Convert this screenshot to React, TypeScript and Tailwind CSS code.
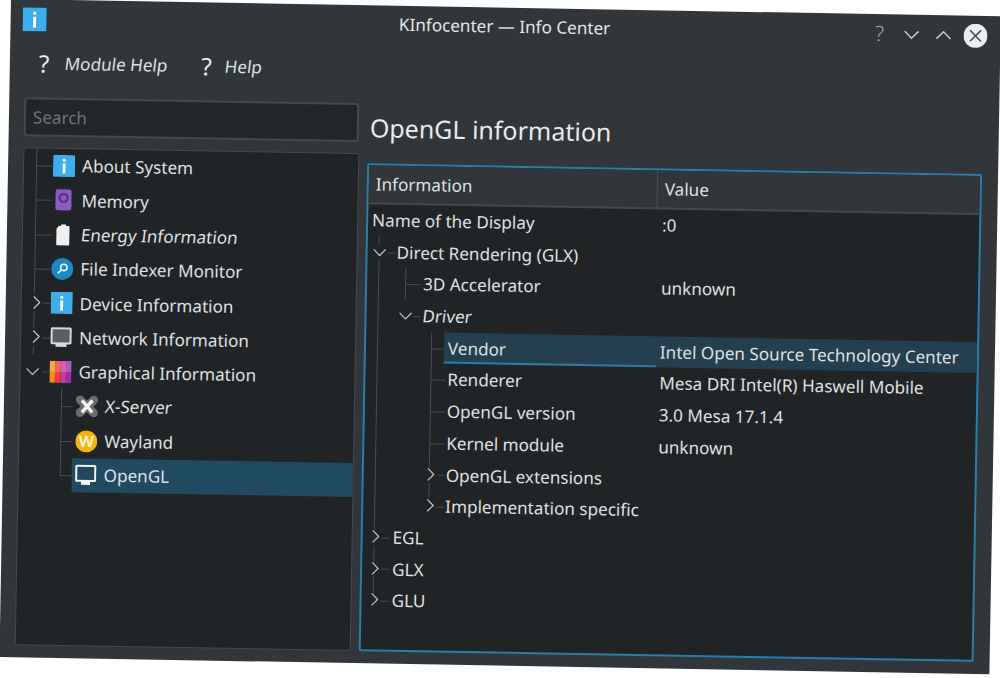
import React from "react";

const Info = ({ big }: { big?: boolean }) => (
  <svg viewBox="0 0 22 22" className={big ? "w-[24px] h-[24px] shrink-0" : "w-[22px] h-[22px] shrink-0"}>
    <rect x="0" y="0" width="22" height="22" rx="1" fill="#3daee9" />
    <rect x="9.6" y="4" width="2.8" height="2.8" fill="#fcfcfc" />
    <rect x="9.6" y="8.5" width="2.8" height="10" fill="#fcfcfc" />
  </svg>
);
const Memory = () => (
  <svg viewBox="0 0 22 22" className="w-[22px] h-[22px] shrink-0">
    <rect x="3" y="0.5" width="16" height="21" rx="2.5" fill="#8e5bc4" />
    <circle cx="11" cy="9" r="4" fill="none" stroke="#57377f" strokeWidth="2.4" />
  </svg>
);
const Battery = () => (
  <svg viewBox="0 0 22 22" className="w-[22px] h-[22px] shrink-0">
    <path d="M7 2h2V0.5h5V2h2.5a1 1 0 0 1 1 1v17.5a1 1 0 0 1-1 1H5.5a1 1 0 0 1-1-1V5z" fill="#f0f0f0" />
  </svg>
);
const Indexer = () => (
  <svg viewBox="0 0 22 22" className="w-[22px] h-[22px] shrink-0">
    <circle cx="11" cy="11" r="11" fill="#1b89c4" />
    <circle cx="12.5" cy="9.5" r="3.2" fill="none" stroke="#e8f4fb" strokeWidth="1.6" />
    <path d="M10 12l-3.5 3.5" stroke="#e8f4fb" strokeWidth="1.8" />
  </svg>
);
const Network = () => (
  <svg viewBox="0 0 22 22" className="w-[22px] h-[22px] shrink-0">
    <path d="M2 0.5h18a1.5 1.5 0 0 1 1.5 1.5v14a1.5 1.5 0 0 1-1.5 1.5h-3.5v2.5h-11v-2.5H2A1.5 1.5 0 0 1 .5 16V2A1.5 1.5 0 0 1 2 .5z" fill="#d9dadb" />
    <rect x="2.5" y="2.5" width="17" height="13" fill="#5b5e62" />
  </svg>
);
const Graphics = () => (
  <svg viewBox="0 0 22 22" className="w-[22px] h-[22px] shrink-0">
    <rect x="0" y="0" width="5.5" height="22" fill="#f98d12" />
    <rect x="5.5" y="0" width="5.5" height="22" fill="#ea3f3a" />
    <rect x="11" y="0" width="5.5" height="22" fill="#d13a93" />
    <rect x="16.5" y="0" width="5.5" height="22" fill="#9a2eb0" />
    <rect x="0" y="0" width="22" height="11" fill="#ffffff" fillOpacity="0.2" />
  </svg>
);
const XServer = () => (
  <svg viewBox="0 0 22 22" className="w-[22px] h-[22px] shrink-0">
    <path d="M4 4.5 L18 17.5 M18 4.5 L4 17.5" stroke="#6a6c6e" strokeWidth="8.5" strokeLinecap="round" />
    <path d="M6 5 L16.5 17 M16.5 5 L6 17" stroke="#f4f4f4" strokeWidth="3.4" />
  </svg>
);
const Wayland = () => (
  <svg viewBox="0 0 22 22" className="w-[22px] h-[22px] shrink-0">
    <circle cx="11" cy="11" r="11" fill="#f4b30e" />
    <text x="11" y="16.5" textAnchor="middle" fontSize="15.5" fontWeight="700" fill="#fff1c8" fontFamily="Noto Sans, sans-serif">W</text>
  </svg>
);
const Monitor = () => (
  <svg viewBox="0 0 22 22" className="w-[22px] h-[22px] shrink-0">
    <path d="M2 0.5h18a1.5 1.5 0 0 1 1.5 1.5v14a1.5 1.5 0 0 1-1.5 1.5h-4.5v3h-9v-3H2A1.5 1.5 0 0 1 .5 16V2A1.5 1.5 0 0 1 2 .5z" fill="#f2f4f5" />
    <rect x="2.5" y="2.5" width="17" height="13" fill="#24485c" />
  </svg>
);

const ChevR = () => (
  <svg viewBox="0 0 8 14" className="w-[8px] h-[14px]">
    <path d="M1 1l6 6-6 6" fill="none" stroke="#bcbec0" strokeWidth="1.3" />
  </svg>
);
const ChevD = () => (
  <svg viewBox="0 0 14 8" className="w-[14px] h-[8px]">
    <path d="M1 1l6 6 6-6" fill="none" stroke="#bcbec0" strokeWidth="1.3" />
  </svg>
);

const Line = ({ c }: { c: string }) => <span className={`absolute bg-[#484d52] ${c}`} />;
const Slant = ({ children }: { children: React.ReactNode }) => (
  <span className="inline-block -skew-x-6">{children}</span>
);

type SideRow = {
  label: string;
  icon: React.ReactNode;
  sel?: boolean;
  italic?: boolean;
  lines: React.ReactNode;
};

const FULL1 = <Line c="left-[12px] top-0 bottom-0 w-px" />;
const H1 = <Line c="left-[12px] top-1/2 w-[17px] h-px" />;
const H1C = <Line c="left-[21px] top-1/2 w-[8px] h-px" />;
const SEG1 = (
  <>
    <Line c="left-[12px] top-0 h-[8px] w-px" />
    <Line c="left-[12px] bottom-0 h-[8px] w-px" />
    <span className="absolute left-[11px] top-[10px]"><ChevR /></span>
    {H1C}
  </>
);

const sideTop: SideRow[] = [
  { label: "About System", icon: <Info />, lines: <>{FULL1}{H1}</> },
  { label: "Memory", icon: <Memory />, lines: <>{FULL1}{H1}</> },
  { label: "Energy Information", icon: <Battery />, italic: true, lines: <>{FULL1}{H1}</> },
  { label: "File Indexer Monitor", icon: <Indexer />, lines: <>{FULL1}{H1}</> },
  { label: "Device Information", icon: <Info />, lines: SEG1 },
  { label: "Network Information", icon: <Network />, lines: SEG1 },
  {
    label: "Graphical Information",
    icon: <Graphics />,
    lines: (
      <>
        <span className="absolute left-[5px] top-[13px]"><ChevD /></span>
        {H1C}
      </>
    ),
  },
];

const SubLines = (
  <>
    <Line c="left-[41px] top-0 bottom-0 w-px" />
    <Line c="left-[41px] top-1/2 w-[12px] h-px" />
  </>
);

const sideSub: SideRow[] = [
  { label: "X-Server", icon: <XServer />, italic: true, lines: SubLines },
  { label: "Wayland", icon: <Wayland />, lines: SubLines },
  {
    label: "OpenGL",
    icon: <Monitor />,
    sel: true,
    lines: (
      <>
        <Line c="left-[41px] top-0 h-1/2 w-px" />
        <Line c="left-[41px] top-1/2 w-[12px] h-px" />
      </>
    ),
  },
];

const Side = ({ r, sub }: { r: SideRow; sub?: boolean }) => {
  const text = (
    <span className="text-[17.1px] text-[#dfe1e2] whitespace-nowrap">
      {r.italic ? <Slant>{r.label}</Slant> : r.label}
    </span>
  );
  return (
    <div className="relative h-[34.3px] flex items-center">
      {r.lines}
      {sub ? (
        <div className={`ml-[53px] flex-1 h-full flex items-center pl-[3px] gap-[7px] ${r.sel ? "bg-[#1f4a61]" : ""}`}>
          {r.icon}
          {text}
        </div>
      ) : (
        <div className="ml-[29px] flex items-center gap-[7px]">
          {r.icon}
          {text}
        </div>
      )}
    </div>
  );
};

type TRow = {
  label: string;
  value?: string;
  pad: string;
  italic?: boolean;
  sel?: boolean;
  lines?: React.ReactNode;
};

const V1 = <Line c="left-[13px] top-0 bottom-0 w-px" />;
const V2 = <Line c="left-[40px] top-0 bottom-0 w-px" />;
const V3 = <Line c="left-[67px] top-0 bottom-0 w-px" />;

const T1R = (
  <>
    <span className="absolute left-[11px] top-[8px]"><ChevR /></span>
    <Line c="left-[21px] top-1/2 w-[8px] h-px" />
  </>
);
const T3R = (
  <>
    <span className="absolute left-[65px] top-[8px]"><ChevR /></span>
    <Line c="left-[75px] top-1/2 w-[8px] h-px" />
  </>
);
const H3 = <Line c="left-[67px] top-1/2 w-[15px] h-px" />;

const tRows: TRow[] = [
  { label: "Name of the Display", value: ":0", pad: "pl-[6px]" },
  {
    label: "Direct Rendering (GLX)",
    pad: "pl-[31px]",
    lines: (
      <>
        <Line c="left-[13px] top-0 h-[8px] w-px" />
        <Line c="left-[13px] bottom-0 h-[8px] w-px" />
        <span className="absolute left-[7px] top-[12px]"><ChevD /></span>
        <Line c="left-[22px] top-1/2 w-[8px] h-px" />
      </>
    ),
  },
  {
    label: "3D Accelerator",
    value: "unknown",
    pad: "pl-[58px]",
    lines: (
      <>
        {V1}
        {V2}
        <Line c="left-[40px] top-1/2 w-[15px] h-px" />
      </>
    ),
  },
  {
    label: "Driver",
    italic: true,
    pad: "pl-[58px]",
    lines: (
      <>
        {V1}
        <span className="absolute left-[34px] top-[12px]"><ChevD /></span>
        <Line c="left-[49px] top-1/2 w-[7px] h-px" />
      </>
    ),
  },
  { label: "Vendor", value: "Intel Open Source Technology Center", pad: "pl-[84px]", sel: true, lines: <>{V1}{V3}{H3}</> },
  { label: "Renderer", value: "Mesa DRI Intel(R) Haswell Mobile", pad: "pl-[84px]", lines: <>{V1}{V3}{H3}</> },
  { label: "OpenGL version", value: "3.0 Mesa 17.1.4", pad: "pl-[84px]", lines: <>{V1}{V3}{H3}</> },
  { label: "Kernel module", value: "unknown", pad: "pl-[84px]", lines: <>{V1}{V3}{H3}</> },
  { label: "OpenGL extensions", pad: "pl-[84px]", lines: <>{V1}<Line c="left-[67px] bottom-0 h-[8px] w-px" /><Line c="left-[67px] top-0 h-[8px] w-px" />{T3R}</> },
  { label: "Implementation specific", pad: "pl-[84px]", lines: <>{V1}<Line c="left-[67px] top-0 h-[8px] w-px" />{T3R}</> },
  { label: "EGL", pad: "pl-[32px]", lines: <><Line c="left-[13px] top-0 h-[8px] w-px" /><Line c="left-[13px] bottom-0 h-[8px] w-px" />{T1R}</> },
  { label: "GLX", pad: "pl-[32px]", lines: <><Line c="left-[13px] top-0 h-[8px] w-px" /><Line c="left-[13px] bottom-0 h-[8px] w-px" />{T1R}</> },
  { label: "GLU", pad: "pl-[32px]", lines: <><Line c="left-[13px] top-0 h-[8px] w-px" />{T1R}</> },
];

export default function App() {
  return (
    <div className="w-screen h-screen overflow-hidden bg-white font-['Noto_Sans',sans-serif]">
      <div className="ml-[10.5px] -mt-[1.5px] w-[990px] h-[658px] origin-top-left rotate-[1deg] bg-[#31363b] flex flex-col px-[15px] pb-[12px]">
        {/* title bar */}
        <div className="h-[39px] -mx-[3px] grid grid-cols-[1fr_auto_1fr] items-center shrink-0">
          <Info big />
          <div className="text-[17.1px] text-[#e4e6e7] pb-[2px] pr-[2px]">KInfocenter — Info Center</div>
          <div className="flex items-center justify-end gap-[16px] pr-[1px]">
            <span className="text-[21px] font-light text-[#a4a7a9] w-[16px] text-center leading-none">?</span>
            <svg viewBox="0 0 16 10" className="w-[16px] h-[10px]"><path d="M1 1.5l7 7 7-7" fill="none" stroke="#c6c8ca" strokeWidth="1.5" /></svg>
            <svg viewBox="0 0 16 10" className="w-[16px] h-[10px]"><path d="M1 8.5l7-7 7 7" fill="none" stroke="#c6c8ca" strokeWidth="1.5" /></svg>
            <svg viewBox="0 0 24 24" className="w-[24px] h-[24px] -ml-[4px]">
              <circle cx="12" cy="12" r="12" fill="#eceded" />
              <path d="M6.5 6.5l11 11M17.5 6.5l-11 11" stroke="#4a4e52" strokeWidth="1.6" />
            </svg>
          </div>
        </div>
        {/* toolbar */}
        <div className="h-[59px] flex items-center shrink-0 pb-[10px]">
          <span className="ml-[14px] w-[14px] text-[24px] leading-none text-[#eceded]">?</span>
          <span className="ml-[12px] text-[17.1px] text-[#dfe1e2]"><Slant>Module Help</Slant></span>
          <span className="ml-[34px] w-[14px] text-[24px] leading-none text-[#eceded]">?</span>
          <span className="ml-[9px] text-[17.1px] text-[#dfe1e2]"><Slant>Help</Slant></span>
        </div>
        {/* main */}
        <div className="flex-1 flex gap-[8px] min-h-0">
          <div className="w-[336px] flex flex-col gap-[11px] shrink-0">
            <div className="h-[39px] mr-px rounded-[3px] border-2 border-[#44494e] bg-[#232629] flex items-center px-[7px] text-[17.1px] text-[#6f7478]">Search</div>
            <div className="flex-1 rounded-[3px] border-[1.5px] border-[#44494e] bg-[#212427] overflow-hidden">
              {sideTop.map((r) => <Side key={r.label} r={r} />)}
              {sideSub.map((r) => <Side key={r.label} r={r} sub />)}
            </div>
          </div>
          <div className="flex-1 flex flex-col min-w-0 pr-px">
            <h1 className="h-[60px] pt-[4px] text-[25px] font-normal leading-[40px] text-[#e8eaeb] shrink-0 pl-[2px]">OpenGL information</h1>
            <div className="flex-1 rounded-[2px] border-2 border-[#2d7ca8] bg-[#212427] overflow-hidden">
              <div className="h-[39px] bg-[#31363b] border-b-2 border-[#44494e] flex text-[17.1px] text-[#dfe1e2]">
                <div className="w-[289px] border-r border-[#4a4f54] pl-[7px] flex items-center">Information</div>
                <div className="flex-1 pl-[7px] flex items-center">Value</div>
              </div>
              {tRows.map((r) => (
                <div key={r.label} className="relative -ml-[2px] h-[31.7px] flex items-center text-[17.1px] text-[#dfe1e2] whitespace-nowrap">
                  {r.lines}
                  {r.sel && <span className="absolute left-[80px] right-0 top-0 bottom-0 bg-[#233f50]" />}
                  {r.sel && <span className="absolute left-[80px] w-[212px] bottom-0 h-[2px] bg-[#2d7ca8]" />}
                  <div className={`relative w-[292px] shrink-0 ${r.pad}`}>{r.italic ? <Slant>{r.label}</Slant> : r.label}</div>
                  {r.value && <div className="relative pl-[4px]">{r.value}</div>}
                </div>
              ))}
            </div>
          </div>
        </div>
      </div>
    </div>
  );
}
